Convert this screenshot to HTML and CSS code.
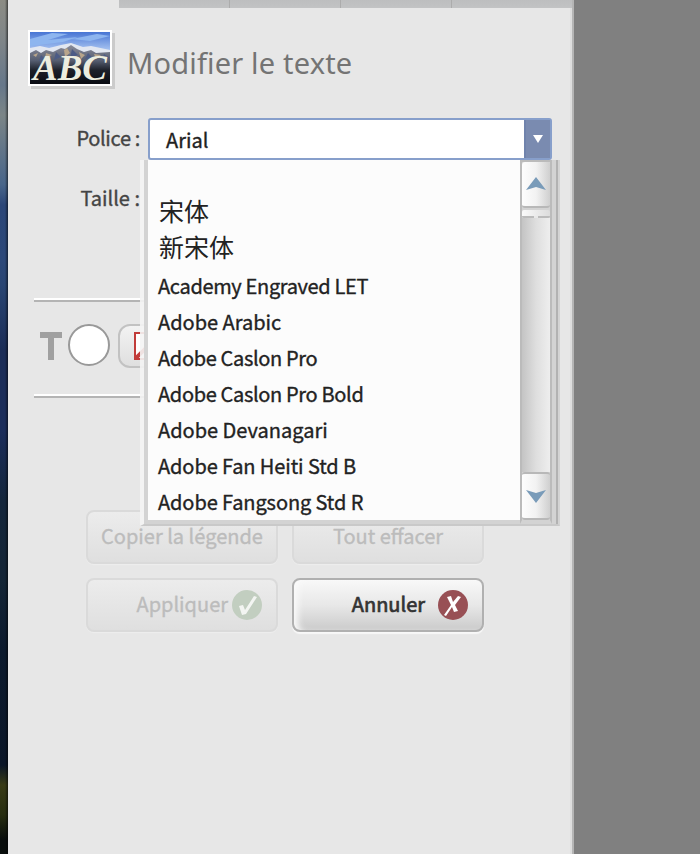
FILE: index.html
```
<!DOCTYPE html>
<html lang="fr">
<head>
<meta charset="utf-8">
<title>Modifier le texte</title>
<link rel="stylesheet" href="styles.css">
</head>
<body>
<div class="app">
  <div class="photo"></div>
  <main class="panel">
    <div class="tabs"><i></i><i></i><i></i><i></i></div>
    <header class="header">
      <svg class="thumb" width="87" height="59" viewBox="0 0 87 59">
        <defs>
          <linearGradient id="sky" x1="0" y1="0" x2="0" y2="1"><stop offset="0" stop-color="#4775d4"/><stop offset=".4" stop-color="#b6cff5"/></linearGradient>
          <linearGradient id="rock" x1="0" y1="0" x2="0" y2="1"><stop offset="0" stop-color="#8a8c9a"/><stop offset=".4" stop-color="#555d70"/><stop offset=".65" stop-color="#1c2029"/><stop offset="1" stop-color="#090b12"/></linearGradient>
        </defs>
        <path d="M3 3h84v56H3z" fill="#cbcbcb"/>
        <path d="M0 0h84v56H0z" fill="#fff"/>
        <path d="M2 2h80v52H2z" fill="url(#sky)"/>
        <path d="M2 9l22-6 16 1-20 6 30-3-15 5-33 4zM44 9l25-5 13 2-20 5z" fill="#8db5ef"/>
        <path d="M2 18l10-2 9 2 12-3 10-2 12 4 8-1 19 4v9H2z" fill="#e2e7f1"/>
        <path d="M2 23l6-3 5 3 5-3 7 2 8-4 4 1 6-4 6 4 7 3 7-2 5 3 14-1v32H2z" fill="url(#rock)"/>
        <path d="M5 25l5-2-2 4zM18 23l6 2-7 3zM36 20l3-2 3 5-5 4zM51 22l6 3-4 4zM66 24l7 1-5 4z" fill="#b8a58b"/>
        <path d="M13 25l4 4-6 2zM28 22l5 5-7 3zM44 19l6 6-8 3zM60 23l5 5-8 1zM76 24l6 4-8 2z" fill="#4c5b85"/>
        <text class="abc" x="5" y="50" textLength="74" lengthAdjust="spacingAndGlyphs">ABC</text>
      </svg>
      <h1>Modifier le texte</h1>
    </header>

    <div class="row police">
      <label class="tight">Police :</label>
      <div class="combo">
        <span class="value">Arial</span>
        <span class="open"><svg width="10" height="8" viewBox="0 0 10 8"><path d="M0 0h10L5 8z" fill="#fff"/></svg></span>
        <div class="menu">
          <ul>
            <li></li>
            <li class="cjk">宋体</li>
            <li class="cjk">新宋体</li>
            <li class="tight">Academy Engraved LET</li>
            <li>Adobe Arabic</li>
            <li class="tight">Adobe Caslon Pro</li>
            <li class="tight">Adobe Caslon Pro Bold</li>
            <li>Adobe Devanagari</li>
            <li class="snug">Adobe Fan Heiti Std B</li>
            <li class="snug">Adobe Fangsong Std R</li>
          </ul>
          <div class="scroll">
            <span class="arrow up"><svg width="20" height="14" viewBox="0 0 20 14"><path d="M10 0L20 13 10 10 0 13z" fill="#799bb9"/></svg></span>
            <span class="grip"></span>
            <span class="track"></span>
            <span class="arrow down"><svg width="20" height="14" viewBox="0 0 20 14"><path d="M10 14L20 1 10 4 0 1z" fill="#799bb9"/></svg></span>
          </div>
        </div>
      </div>
    </div>
    <div class="row taille"><label>Taille :</label></div>

    <section class="colors">
      <svg class="letter" width="22" height="28" viewBox="0 0 22 28"><path d="M0 0h22v6h-8v22H8V6H0z" fill="#a0a0a0"/></svg>
      <span class="swatch"></span>
      <span class="none"><svg width="28" height="28" viewBox="0 0 28 28"><path d="M1 1h26v26H1z" fill="#fff" stroke="#c13c3a" stroke-width="2"/><path d="M1 27L27 1" stroke="#c13c3a" stroke-width="4"/></svg></span>
    </section>

    <section class="buttons">
      <button class="off"><span>Copier la légende</span></button>
      <button class="off"><span>Tout effacer</span></button>
      <button class="off apply"><span>Appliquer</span><svg width="30" height="30" viewBox="0 0 30 30"><circle cx="15" cy="15" r="15" fill="#c2cec0"/><path d="M7 16l4-1 2 5L22 6l3 1-11 17-4 1z" fill="#f3f5f2"/></svg></button>
      <button class="cancel"><span>Annuler</span><svg width="30" height="30" viewBox="0 0 30 30"><circle cx="15" cy="15" r="15" fill="#985055"/><path d="M9 7l4-1 2 6 5-6 3 1-6 8 3 6-4 1-2-5-6 9-2-1 7-10z" fill="#fff"/></svg></button>
    </section>
  </main>
</div>
</body>
</html>
```
FILE: styles.css
```
* { box-sizing: border-box; }
body { margin: 0; background: #808080; font: 400 20px/36px "Noto Sans CJK SC", "Noto Sans", sans-serif; color: #333; -webkit-text-stroke: .35px currentColor; }
.app { display: flex; height: 854px; overflow: hidden; }
.photo {
  width: 8px;
  background: linear-gradient(90deg, transparent 5px, rgba(0,0,0,.55)), linear-gradient(#8c8c84 0, #7f8588 40px, #66778a 85px, #7b8587 115px, #48658a 185px, #2b4678 205px, #2c4879 260px, #294573 285px, #1b2d57 350px, #1b2d5b 430px, #14263c 500px, #142536 580px, #0c1a2d 650px, #0b1628 765px, #383a15 785px, #272d10 815px, #080d0c 840px);
}
.panel { width: 566px; background: #e7e7e7; border-right: 2px solid #b5b5b5; box-shadow: inset -2px 0 #dedede; }
.tabs { display: grid; grid-template-columns: 110px 111px 111px 109px; height: 8px; margin-left: 111px; background: linear-gradient(#bdbebf, #c2c3c4); }
.tabs i + i { border-left: 1px solid #acacac; }
.header { display: flex; height: 86px; padding: 22px 0 0 20px; }
.thumb { flex: none; }
.abc { font: italic bold 35px "Liberation Serif", serif; fill: #eceddf; }
h1 { margin: 10px 0 0 12px; font: 400 29px/46px "Noto Sans", sans-serif; color: #747474; letter-spacing: .18px; -webkit-text-stroke: 0; }
.row { display: flex; height: 60px; }
.police { margin-top: 24px; }
label { width: 132px; text-align: right; line-height: 39px; color: #444; }
.combo { position: relative; display: flex; width: 404px; height: 42px; margin-left: 8px; border: 2px solid #879fcb; border-radius: 3px; background: #fff; }
.value { flex: 1; padding-left: 16px; line-height: 39px; color: #222; }
.open { display: flex; width: 26px; align-items: center; justify-content: center; background: #7a8bb0; border-left: 2px solid #7083ac; }
.menu {
  position: absolute; left: -10px; top: 40px; z-index: 2; display: flex; width: 420px; height: 366px;
  border: solid; border-width: 0 2px 2px 4px; border-color: #d4d4d4 #d3d3d3 #c9c9c9 rgba(244,244,244,.9);
}
.menu::before { content: ""; width: 4px; background: #d3d3d3; }
.menu::after { content: ""; width: 4px; background: #d3d3d3; border-right: 2px solid #b2b2b2; }
.menu ul { width: 372px; height: 364px; margin: 0; padding: 0 0 0 10px; list-style: none; background: #fcfcfc; border-bottom: 4px solid #d3d3d3; color: #222; }
.menu li { height: 36px; line-height: 35px; white-space: nowrap; }
.menu li.cjk { padding-left: 1px; font-size: 25px; line-height: 29px; -webkit-text-stroke: 0; }
.tight { letter-spacing: -.34px; }
.snug { letter-spacing: -.1px; }
.scroll { display: flex; flex-direction: column; width: 32px; height: 364px; border: solid #bbb; border-width: 2px 2px 0 2px; border-bottom: 4px solid #d3d3d3; background: #d3d3d3; }
.arrow { display: flex; flex: none; height: 46px; align-items: center; justify-content: center; border-bottom: 2px solid #b8b8b8; border-radius: 3px; background: linear-gradient(90deg, #fdfdfd, #f2f2f2 50%, #cfcfcf); }
.grip { flex: none; height: 8px; margin-top: 2px; border-bottom: 2px solid #bbb; border-radius: 2px; background: linear-gradient(90deg, #fafafa, #dcdcdc); }
.grip::after { content: ""; display: block; width: 4px; height: 2px; margin: 6px auto 0; background: #e8e8e8; }
.track { flex: 1; background: linear-gradient(90deg, #c4c4c4, #dedede 50%, #eee); }
.down { border-top: 2px solid #b8b8b8; height: 48px; }
.colors { display: flex; height: 98px; margin: 62px 12px 0 26px; padding: 22px 0 0 6px; align-items: flex-start; border: solid #b4b4b4; border-width: 2px 0; box-shadow: 0 -2px #fff, inset 0 -2px #fff; }
.letter { margin-top: 8px; }
.swatch { width: 42px; height: 42px; margin-left: 6px; border: 2px solid #999; border-radius: 50%; background: #fff; }
.none { display: flex; width: 80px; height: 44px; margin-left: 8px; padding: 6px 0 0 14px; border: 2px solid #c2c2c2; border-radius: 12px; background: linear-gradient(#f3f3f3, #dfdfdf); }
.buttons { display: grid; grid-template: 54px 54px / 192px 192px; gap: 14px; margin: 112px 0 0 78px; }
button { display: flex; align-items: center; justify-content: center; padding: 0; border: 2px solid #b0b0b0; border-radius: 8px; background: linear-gradient(#f8f8f8, #e8e8e8 50%, #cbcbcb); box-shadow: 0 2px 1px #f4f4f4; font: inherit; color: #333; -webkit-text-stroke: inherit; }
button span { padding-bottom: 2px; }
.off { border-color: #dadada; background: linear-gradient(#ececec, #dfdfdf); color: #bcbcbc; box-shadow: 0 1px 1px #eee; }
.apply, .cancel { justify-content: flex-end; padding-right: 14px; }
.apply svg { margin-left: 4px; }
.cancel svg { margin-left: 13px; }
.cancel { -webkit-text-stroke: .7px; box-shadow: 0 2px 1px #f8f8f8, inset 7px 0 6px -3px #fafafa; }
```
